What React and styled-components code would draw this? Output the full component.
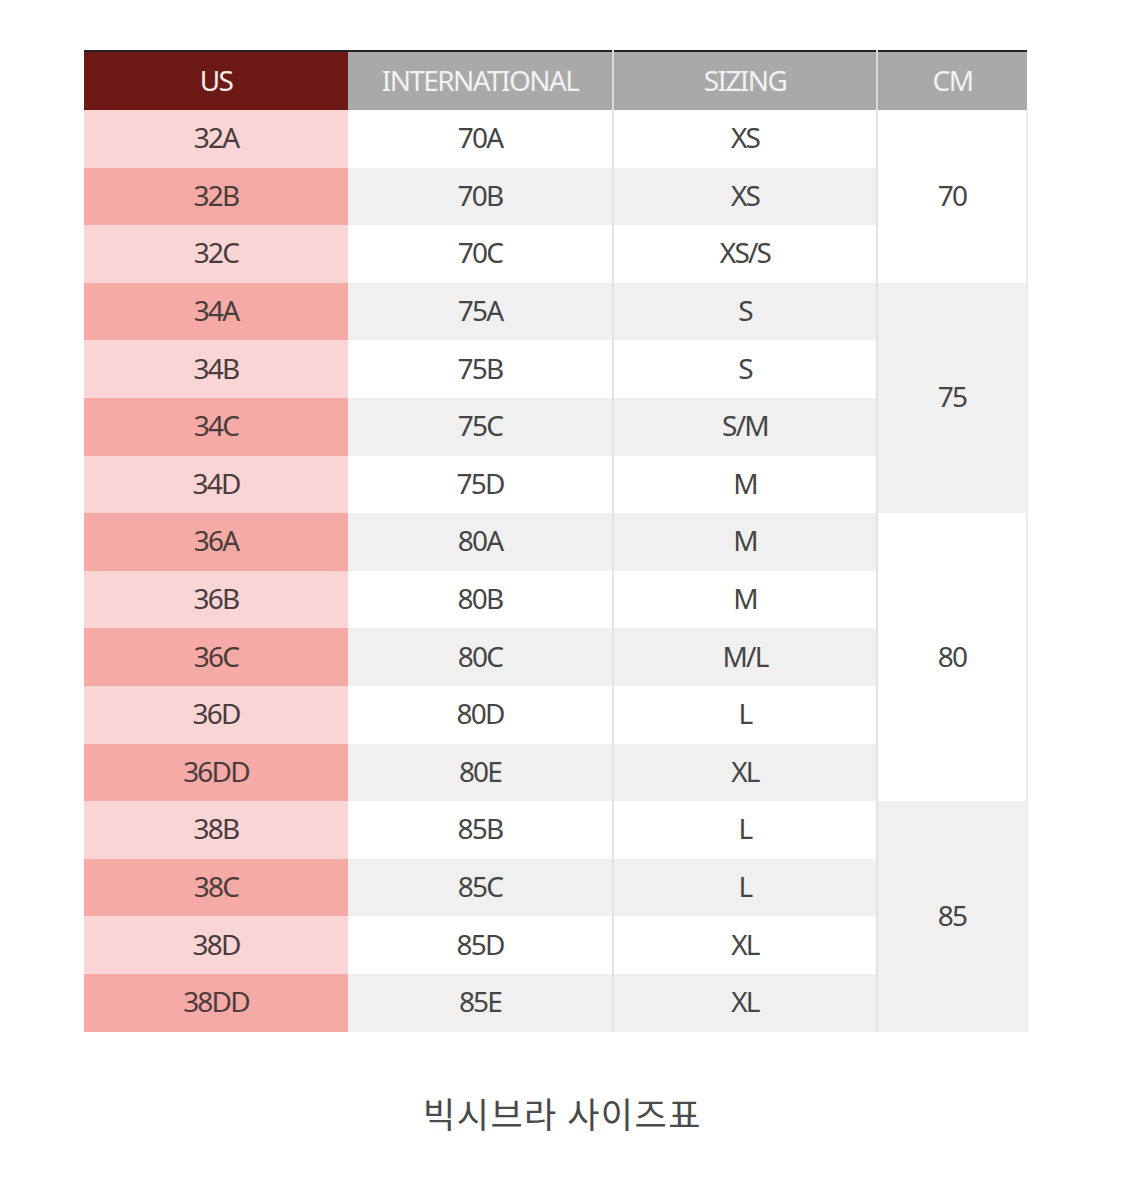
import React from 'react';
import styled, { createGlobalStyle } from 'styled-components';

const GlobalStyle = createGlobalStyle`
  html, body {
    margin: 0;
    padding: 0;
    background: #ffffff;
  }
  body {
    font-family: 'Noto Sans', 'Noto Sans CJK KR', sans-serif;
  }
`;

const rows = [
  ['32A', '70A', 'XS', '70', 3],
  ['32B', '70B', 'XS'],
  ['32C', '70C', 'XS/S'],
  ['34A', '75A', 'S', '75', 4],
  ['34B', '75B', 'S'],
  ['34C', '75C', 'S/M'],
  ['34D', '75D', 'M'],
  ['36A', '80A', 'M', '80', 5],
  ['36B', '80B', 'M'],
  ['36C', '80C', 'M/L'],
  ['36D', '80D', 'L'],
  ['36DD', '80E', 'XL'],
  ['38B', '85B', 'L', '85', 4],
  ['38C', '85C', 'L'],
  ['38D', '85D', 'XL'],
  ['38DD', '85E', 'XL'],
];

function App() {
  let cmIndex = -1;
  return (
    <Page>
      <GlobalStyle />
      <SizeTable>
        <colgroup>
          <col style={{ width: 264 }} />
          <col style={{ width: 265 }} />
          <col style={{ width: 264 }} />
          <col style={{ width: 150 }} />
        </colgroup>
        <thead>
          <tr>
            <HeadCell $accent>US</HeadCell>
            <HeadCell>INTERNATIONAL</HeadCell>
            <HeadCell>SIZING</HeadCell>
            <HeadCell>CM</HeadCell>
          </tr>
        </thead>
        <tbody>
          {rows.map(([us, intl, sizing, cm, span], i) => {
            if (cm) cmIndex += 1;
            return (
              <Row key={us}>
                <UsCell $dark={i % 2 === 1}>{us}</UsCell>
                <Cell $shade={i % 2 === 1}>{intl}</Cell>
                <Cell $shade={i % 2 === 1}>{sizing}</Cell>
                {cm && (
                  <CmCell rowSpan={span} $shade={cmIndex % 2 === 1}>
                    {cm}
                  </CmCell>
                )}
              </Row>
            );
          })}
        </tbody>
      </SizeTable>
      <Caption>빅시브라 사이즈표</Caption>
    </Page>
  );
}

const Page = styled.div`
  width: 1125px;
  padding-top: 50px;
  box-sizing: border-box;
`;

const SizeTable = styled.table`
  width: 943px;
  margin-left: 84px;
  border-collapse: collapse;
  table-layout: fixed;
  border-top: 2px solid #222;
  font-family: 'Noto Sans', 'Noto Sans CJK KR', sans-serif;
`;

const HeadCell = styled.th`
  height: 56px;
  padding: 0 0 2px;
  background: ${(p) => (p.$accent ? '#6d1a16' : '#a9a9a9')};
  color: ${(p) => (p.$accent ? '#f6ecea' : '#f2f2f2')};
  font-size: 28px;
  font-weight: 400;
  letter-spacing: -1.6px;
  text-align: center;
  border-left: ${(p) => (p.$accent ? 'none' : '2px solid #d9d9d9')};
  &:nth-child(2) {
    border-left: none;
  }
`;

const Row = styled.tr`
  height: 57.6px;
`;

const BaseCell = styled.td`
  padding: 0 0 3px;
  text-align: center;
  font-size: 28px;
  font-weight: 400;
  letter-spacing: -1.8px;
  color: #454545;
`;

const UsCell = styled(BaseCell)`
  background: ${(p) => (p.$dark ? '#f5aaa6' : '#fad5d5')};
  color: #4a3c3c;
`;

const Cell = styled(BaseCell)`
  background: ${(p) => (p.$shade ? '#f0f0f0' : '#ffffff')};
  & + & {
    border-left: 2px solid #e2e2e2;
  }
`;

const CmCell = styled(BaseCell)`
  background: ${(p) => (p.$shade ? '#f0f0f0' : '#ffffff')};
  border-left: 2px solid #e2e2e2;
  border-right: 2px solid #ececec;
`;

const Caption = styled.div`
  margin-top: 55px;
  text-align: center;
  font-family: 'Noto Sans CJK KR', sans-serif;
  font-size: 35px;
  color: #4a4a4a;
  letter-spacing: 1.5px;
`;

export default App;
